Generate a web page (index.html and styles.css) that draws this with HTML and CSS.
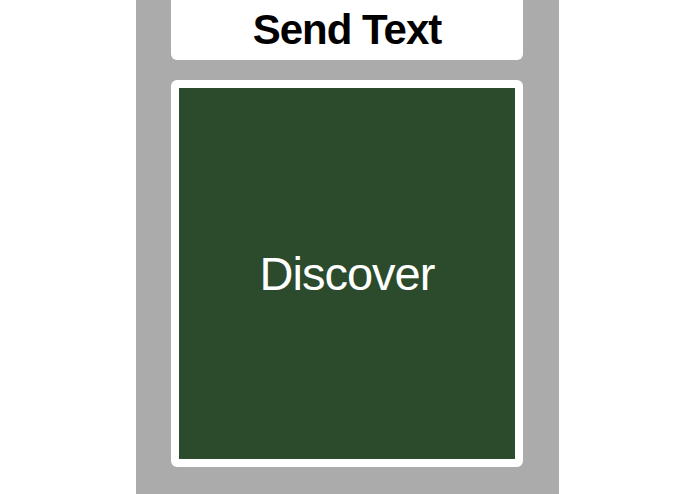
FILE: index.html
```html
<!DOCTYPE html>
<html>
<head>
<meta charset="utf-8">
<link rel="stylesheet" href="styles.css">
</head>
<body>
<div class="column">
  <div class="title-box"><span class="title">Send Text</span></div>
  <div class="panel"><span class="panel-label">Discover</span></div>
</div>
</body>
</html>
```
FILE: styles.css
```css
html, body {
  margin: 0;
  padding: 0;
  background: #ffffff;
  width: 695px;
  height: 494px;
  overflow: hidden;
}
.column {
  margin-left: 136px;
  width: 388px;
  height: 494px;
  padding-left: 35px;
  box-sizing: content-box;
  padding-right: 0;
  background: #ababab;
  display: flex;
  flex-direction: column;
  gap: 20px;
  width: 352px;
  padding-right: 36px;
}
.title-box {
  height: 60px;
  background: #ffffff;
  border-radius: 0 0 6px 6px;
  display: flex;
  align-items: center;
  justify-content: center;
}
.title {
  font-family: "Liberation Sans", Arial, sans-serif;
  font-weight: bold;
  font-size: 42px;
  letter-spacing: -1px;
  color: #000000;
  line-height: 1;
}
.panel {
  height: 387px;
  box-sizing: border-box;
  border: 8px solid #ffffff;
  border-radius: 6px;
  background: #2c4a2c;
  display: flex;
  align-items: center;
  justify-content: center;
}
.panel-label {
  font-family: "Liberation Sans", Arial, sans-serif;
  font-size: 47px;
  letter-spacing: -1px;
  color: #ffffff;
  line-height: 1;
}
```
